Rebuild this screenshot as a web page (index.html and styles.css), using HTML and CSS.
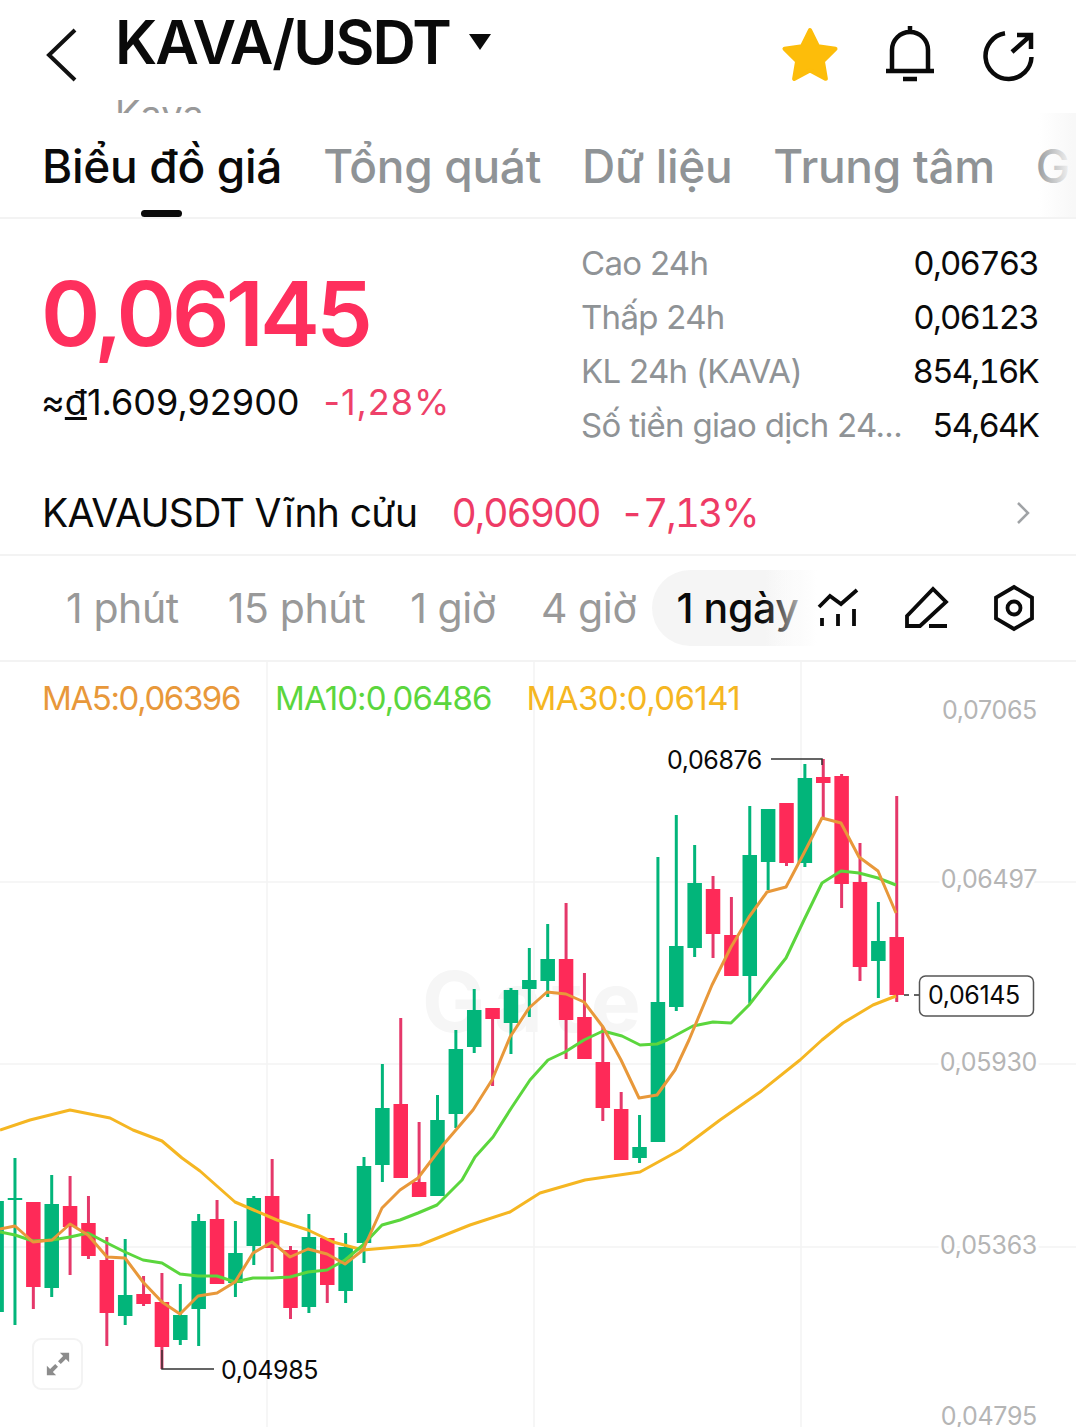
FILE: index.html
```html
<!DOCTYPE html>
<html lang="vi">
<head>
    <meta charset="UTF-8">
    <meta name="viewport" content="width=device-width, initial-scale=1.0">
    <title>KAVA/USDT</title>
    <link rel="stylesheet" href="styles.css">
</head>
<body>

    <header class="topbar">
        <svg class="back-icon" viewBox="0 0 32 54"><path d="M29 2 L3 27 L29 52"/></svg>
        <div class="pair">
            <div class="pair-name">KAVA/USDT <span class="caret"></span></div>
            <div class="pair-sub">Kava</div>
        </div>
        <div class="top-actions">
            <svg class="star" viewBox="0 0 58 56"><polygon points="29,4 36.6,19.5 53.6,22 41.4,34 44.3,51 29,43 13.7,51 16.6,34 4.4,22 21.4,19.5"/></svg>
            <svg class="line-icon bell" viewBox="0 0 48 56"><path d="M24 0 V6 M6 45 V24 a18 18 0 0 1 36 0 V45 M0 45 H48 M17 53 H31"/></svg>
            <svg class="line-icon share" viewBox="0 0 60 60"><path d="M25 5.3 A23 23 0 1 0 51.5 29 M32 24 L50 8 M37 7 H51 V21"/></svg>
        </div>
    </header>

    <nav class="tabs">
        <a class="tab active">Biểu đồ giá</a>
        <a class="tab">Tổng quát</a>
        <a class="tab">Dữ liệu</a>
        <a class="tab">Trung tâm</a>
        <a class="tab">Giao dịch</a>
    </nav>

    <section class="ticker">
        <div class="ticker-left">
            <div class="last-price">0,06145</div>
            <div class="fiat">
                <span>≈<u>đ</u>1.609,92900</span>
                <span class="change">-1,28%</span>
            </div>
        </div>
        <div class="stats">
            <div class="stat"><span>Cao 24h</span><b>0,06763</b></div>
            <div class="stat"><span>Thấp 24h</span><b>0,06123</b></div>
            <div class="stat"><span>KL 24h (KAVA)</span><b>854,16K</b></div>
            <div class="stat"><span>Số tiền giao dịch 24...</span><b>54,64K</b></div>
        </div>
    </section>

    <section class="perp">
        <span class="perp-name">KAVAUSDT Vĩnh cửu</span>
        <span class="perp-price">0,06900</span>
        <span class="perp-price">-7,13%</span>
        <svg class="perp-arrow" viewBox="0 0 14 24"><path d="M2 2 L12 12 L2 22"/></svg>
    </section>

    <section class="periods">
        <span class="period first">1 phút</span>
        <span class="period">15 phút</span>
        <span class="period">1 giờ</span>
        <span class="period">4 giờ</span>
        <span class="period selected">1 ngày</span>
        <svg class="line-icon tool tool-ma" viewBox="0 0 44 42"><path d="M2 20 L13 9 L24 17 L40 3 M5 31 V39 M21 27 V39 M37 22 V39"/></svg>
        <svg class="line-icon tool tool-pen" viewBox="0 0 48 44"><path d="M4 40 V30 L30 3 L43 16 L17 40 Z M26 40 H44"/></svg>
        <svg class="line-icon tool tool-hex" viewBox="0 0 44 48"><path d="M22 3 L40 13.5 V34.5 L22 45 L4 34.5 V13.5 Z"/><circle cx="22" cy="24" r="6.5"/></svg>
    </section>

    <section class="chart">
        <div class="legend">
            <span class="ma5">MA5:0,06396</span>
            <span class="ma10">MA10:0,06486</span>
            <span class="ma30">MA30:0,06141</span>
        </div>
        <svg id="chartSvg" viewBox="0 662 1076 765"></svg>
        <button class="expand">
            <svg viewBox="0 0 28 28"><path d="M16 2 H26 V12 L22.5 8.5 L17 14 L14 11 L19.5 5.5 Z M12 26 H2 V16 L5.5 19.5 L11 14 L14 17 L8.5 22.5 Z"/></svg>
        </button>
    </section>

    <script src="chart.js"></script>
</body>
</html>
```

FILE: styles.css
```css
* {
    box-sizing: border-box;
}
html, body {
    height: 1427px;
    overflow: hidden;
}
body {
    margin: 0;
    width: 1076px;
    background-color: white;
    color: #0a0a0a;
    font-family: Inter, "Noto Sans", sans-serif;
}
.line-icon {
    fill: none;
    stroke: #0a0a0a;
    stroke-width: 4.5;
}

/* top bar */
.topbar {
    display: flex;
    height: 113px;
    padding-left: 46px;
    overflow: hidden;
}
.back-icon {
    width: 32px;
    height: 54px;
    margin-top: 28px;
    fill: none;
    stroke: #111;
    stroke-width: 4;
}
.pair {
    margin-left: 37px;
}
.pair-name {
    display: flex;
    align-items: center;
    height: 84px;
    font-size: 60px;
    font-weight: 600;
    letter-spacing: -1.9px;
    white-space: pre;
}
.caret {
    width: 0;
    height: 0;
    margin: 0 0 0 6px;
    border-left: 11px solid transparent;
    border-right: 11px solid transparent;
    border-top: 16px solid #0a0a0a;
}
.pair-sub {
    margin-top: 7px;
    font-size: 38px;
    color: #999;
}
.top-actions {
    display: flex;
    align-items: flex-start;
    margin-left: auto;
    padding-top: 26px;
}
.star {
    width: 60px;
    height: 58px;
    fill: #fdbd0a;
    stroke: #fdbd0a;
    stroke-width: 4;
    stroke-linejoin: round;
}
.bell {
    width: 48px;
    height: 56px;
    margin-left: 46px;
}
.share {
    width: 60px;
    height: 60px;
    margin: 2px 36px 0 46px;
}

/* tabs */
.tabs {
    position: relative;
    display: flex;
    gap: 41px;
    height: 106px;
    padding: 25px 0 0 42px;
    border-bottom: 2px solid #f3f3f3;
    overflow: hidden;
    white-space: nowrap;
}
.tabs::after {
    content: "";
    position: absolute;
    top: 0;
    right: 0;
    width: 38px;
    height: 100%;
    background: linear-gradient(to right, rgba(255, 255, 255, 0.1), #f8f8f8 90%);
}
.tab {
    position: relative;
    font-size: 46px;
    font-weight: 500;
    letter-spacing: -0.3px;
    color: #8f9396;
}
.tab.active {
    color: #0a0a0a;
}
.tab.active::after {
    content: "";
    position: absolute;
    left: 99px;
    top: 72px;
    width: 41px;
    height: 7px;
    border-radius: 4px;
    background-color: #0a0a0a;
}

/* price block */
.ticker {
    display: flex;
    justify-content: space-between;
    height: 240px;
    padding: 17px 38px 0 41px;
}
.ticker-left {
    padding-top: 28px;
}
.last-price {
    font-size: 90px;
    font-weight: 600;
    line-height: 100px;
    letter-spacing: -3.8px;
    color: #fe2f5d;
}
.fiat {
    display: flex;
    gap: 24px;
    margin-top: 16px;
    font-size: 36px;
}
.change {
    letter-spacing: 0.9px;
    color: #ee4169;
}
.stats {
    width: 457px;
}
.stat {
    display: flex;
    justify-content: space-between;
    height: 54px;
    line-height: 54px;
    font-size: 33px;
    letter-spacing: -0.7px;
    color: #8f9396;
}
.stat b {
    font-weight: 400;
    font-variant-numeric: tabular-nums;
    letter-spacing: -1.8px;
    color: #0a0a0a;
}

/* perpetual row */
.perp {
    display: flex;
    align-items: center;
    gap: 20px;
    height: 97px;
    padding: 12px 46px 0 42px;
    border-bottom: 2px solid #f3f3f3;
    font-size: 39px;
    letter-spacing: -0.6px;
}
.perp-name {
    margin-right: 14px;
}
.perp-price {
    font-variant-numeric: tabular-nums;
    letter-spacing: -2px;
    color: #ee3b66;
}
.perp-arrow {
    width: 14px;
    height: 24px;
    margin-left: auto;
    fill: none;
    stroke: #a0a3a6;
    stroke-width: 2.5;
}

/* period selector */
.periods {
    position: relative;
    display: flex;
    align-items: center;
    height: 106px;
    padding-left: 66px;
    border-bottom: 2px solid #f3f3f3;
    font-size: 41px;
    color: #999;
}
.period {
    margin-right: 45px;
    letter-spacing: -0.4px;
}
.period.first {
    margin-right: 49px;
}
.period.selected {
    position: relative;
    display: flex;
    align-items: center;
    width: 165px;
    height: 76px;
    margin: 0 0 0 -29px;
    padding-left: 24px;
    border-radius: 38px 0 0 38px;
    background: linear-gradient(to right, #f5f5f5 70%, white);
    color: #0a0a0a;
    font-weight: 500;
}
.period.selected::after {
    content: "";
    position: absolute;
    top: 0;
    right: 14px;
    width: 40px;
    height: 100%;
    background: linear-gradient(to right, rgba(250, 250, 250, 0), rgba(252, 252, 252, 0.75));
}
.tool {
    flex: none;
    stroke-width: 3.8;
}
.tool-ma {
    width: 44px;
    height: 42px;
    margin-left: 0;
}
.tool-pen {
    width: 48px;
    height: 44px;
    margin-left: 42px;
}
.tool-hex {
    width: 44px;
    height: 48px;
    margin-left: 41px;
}

/* chart */
.chart {
    position: relative;
    height: 765px;
}
#chartSvg {
    display: block;
    width: 1076px;
    height: 765px;
}
.legend {
    position: absolute;
    top: 16px;
    left: 42px;
    display: flex;
    gap: 35px;
    font-size: 33px;
}
.ma5 {
    letter-spacing: -1.4px;
    color: #e8983a;
}
.ma10 {
    letter-spacing: -0.9px;
    color: #5bd63d;
}
.ma30 {
    letter-spacing: -0.6px;
    color: #f5b622;
}
.expand {
    position: absolute;
    left: 32px;
    top: 676px;
    width: 51px;
    height: 52px;
    padding: 11px;
    border: 2px solid #f3f3f3;
    border-radius: 9px;
    background-color: white;
}
.expand svg {
    display: block;
    width: 26px;
    height: 26px;
    fill: #8c8c8c;
}
.grid {
    stroke: #f3f3f3;
    stroke-width: 1.5;
}
.watermark {
    font-size: 84px;
    font-weight: 700;
    letter-spacing: 9px;
    fill: #f6f6f6;
}
.wick {
    stroke-width: 3;
}
.up {
    fill: #02b57a;
    stroke: #02b57a;
}
.down {
    fill: #fe2a58;
    stroke: #e5386a;
}
.down rect, .up rect {
    stroke: none;
}
.ma-line {
    fill: none;
    stroke-width: 3;
    stroke-linejoin: round;
}
.axis-label {
    font-size: 25px;
    letter-spacing: -0.3px;
    fill: #b5b5b5;
    stroke: white;
    stroke-width: 6px;
    paint-order: stroke;
    text-anchor: end;
}
.mark-label {
    font-size: 25px;
    letter-spacing: -0.4px;
    fill: #0a0a0a;
}
.leader {
    fill: none;
    stroke: #333;
    stroke-width: 1.5;
}
.leader.dash {
    stroke-dasharray: 5 5;
}
.price-tag {
    fill: white;
    stroke: #555;
    stroke-width: 1.5;
}
```

FILE: chart.js
```js
// x of the first candle and distance between candles
const startX = -3.4;
const stepX = 18.37;
const bodyWidth = 14.5;

// wick top, body top, body bottom, wick bottom, u = green / d = red
const candles = [
    [1201, 1201, 1312, 1312, 'u'],
    [1158, 1198, 1200, 1325, 'u'],
    [1202, 1202, 1287, 1309, 'd'],
    [1175, 1204, 1288, 1297, 'u'],
    [1176, 1206, 1227, 1275, 'd'],
    [1196, 1223, 1256, 1259, 'd'],
    [1237, 1260, 1313, 1346, 'd'],
    [1239, 1295, 1316, 1325, 'u'],
    [1276, 1294, 1304, 1306, 'd'],
    [1273, 1302, 1347, 1369, 'd'],
    [1284, 1315, 1340, 1345, 'u'],
    [1214, 1221, 1309, 1346, 'u'],
    [1200, 1219, 1284, 1284, 'd'],
    [1221, 1253, 1283, 1297, 'u'],
    [1196, 1198, 1246, 1265, 'u'],
    [1159, 1196, 1248, 1272, 'd'],
    [1246, 1250, 1308, 1319, 'd'],
    [1214, 1237, 1307, 1313, 'u'],
    [1238, 1238, 1285, 1303, 'd'],
    [1233, 1247, 1291, 1303, 'u'],
    [1157, 1166, 1243, 1263, 'u'],
    [1064, 1108, 1165, 1182, 'u'],
    [1018, 1104, 1178, 1178, 'd'],
    [1122, 1182, 1197, 1197, 'd'],
    [1095, 1120, 1196, 1196, 'u'],
    [1030, 1049, 1114, 1128, 'u'],
    [989, 1010, 1047, 1053, 'u'],
    [1008, 1008, 1019, 1086, 'd'],
    [988, 990, 1023, 1054, 'u'],
    [948, 980, 989, 1017, 'u'],
    [924, 959, 981, 997, 'u'],
    [903, 959, 1020, 1059, 'd'],
    [973, 1017, 1059, 1059, 'd'],
    [1027, 1062, 1108, 1121, 'd'],
    [1092, 1109, 1160, 1160, 'd'],
    [1115, 1147, 1158, 1163, 'u'],
    [857, 1002, 1142, 1142, 'u'],
    [815, 946, 1007, 1011, 'u'],
    [845, 883, 948, 957, 'u'],
    [876, 889, 934, 958, 'd'],
    [897, 935, 976, 976, 'd'],
    [806, 855, 976, 1003, 'u'],
    [809, 809, 862, 890, 'u'],
    [803, 803, 863, 866, 'd'],
    [764, 778, 863, 867, 'u'],
    [759, 777, 783, 818, 'd'],
    [774, 776, 884, 908, 'd'],
    [843, 882, 967, 981, 'd'],
    [902, 941, 961, 998, 'u'],
    [796, 937, 995, 1002, 'd']
];

const ma5 = '0,1229 15,1226 33,1242 52,1240 70,1224 88,1235 107,1257 125,1258 143,1282 162,1302 180,1314 198,1296 217,1293 235,1282 253,1253 272,1242 290,1257 308,1249 327,1254 345,1264 363,1250 382,1208 400,1190 418,1178 443,1145 473,1110 492,1080 510,1037 529,1008 547,992 566,994 584,1002 603,1027 621,1060 639,1098 657,1095 675,1070 689,1040 712,985 731,947 749,917 767,892 786,887 804,853 822,818 841,823 859,857 878,871 896,913';
const ma10 = '0,1232 15,1235 33,1241 52,1240 70,1237 88,1233 107,1243 125,1252 143,1260 162,1263 180,1274 198,1276 217,1276 235,1282 253,1278 272,1278 290,1277 308,1272 327,1270 345,1260 363,1245 382,1225 400,1220 418,1213 437,1205 462,1180 475,1157 493,1137 512,1107 530,1080 548,1060 565,1052 584,1040 603,1031 622,1036 640,1045 657,1044 667,1040 693,1026 713,1022 731,1023 749,1005 767,982 786,958 804,920 822,883 841,871 859,873 878,878 896,885';
const ma30 = '0,1130 30,1120 70,1110 110,1118 133,1130 162,1141 182,1158 200,1171 235,1202 277,1220 308,1230 333,1242 363,1250 420,1245 470,1225 510,1212 540,1193 585,1180 640,1172 680,1150 720,1120 760,1092 800,1060 822,1040 843,1023 873,1005 896,996';

const axisLabels = [['0,07065', 719], ['0,06497', 888], ['0,05930', 1071], ['0,05363', 1254], ['0,04795', 1425]];

let svg = '';

// grid
[267, 534, 801].forEach(x => {
    svg += `<line class="grid" x1="${x}" y1="662" x2="${x}" y2="1427"/>`;
});
[882, 1064, 1247].forEach(y => {
    svg += `<line class="grid" x1="0" y1="${y}" x2="1076" y2="${y}"/>`;
});

svg += '<text class="watermark" x="422" y="1032">Gate</text>';

// candles
candles.forEach((c, i) => {
    const x = startX + i * stepX;
    const cls = c[4] === 'u' ? 'up' : 'down';
    svg += `<g class="${cls}">`;
    svg += `<line class="wick" x1="${x}" y1="${c[0]}" x2="${x}" y2="${c[3]}"/>`;
    svg += `<rect x="${x - bodyWidth / 2}" y="${c[1]}" width="${bodyWidth}" height="${c[2] - c[1]}"/>`;
    svg += '</g>';
});

// moving averages
svg += `<polyline class="ma-line" stroke="#f5b622" points="${ma30}"/>`;
svg += `<polyline class="ma-line" stroke="#5bd63d" points="${ma10}"/>`;
svg += `<polyline class="ma-line" stroke="#e8983a" points="${ma5}"/>`;

// axis labels
axisLabels.forEach(l => {
    svg += `<text class="axis-label" x="1037" y="${l[1]}">${l[0]}</text>`;
});

// high, low and last price marks
svg += '<polyline class="leader" points="771,759 822,759 822,765"/>';
svg += '<text class="mark-label" x="667" y="769">0,06876</text>';
svg += '<polyline class="leader" points="162,1350 162,1369 214,1369"/>';
svg += '<text class="mark-label" x="221" y="1379">0,04985</text>';
svg += '<line class="leader dash" x1="904" y1="995" x2="919" y2="995"/>';
svg += '<rect class="price-tag" x="919.5" y="976" width="114" height="40" rx="6"/>';
svg += '<text class="mark-label" x="928" y="1004">0,06145</text>';

document.getElementById('chartSvg').innerHTML = svg;
```
